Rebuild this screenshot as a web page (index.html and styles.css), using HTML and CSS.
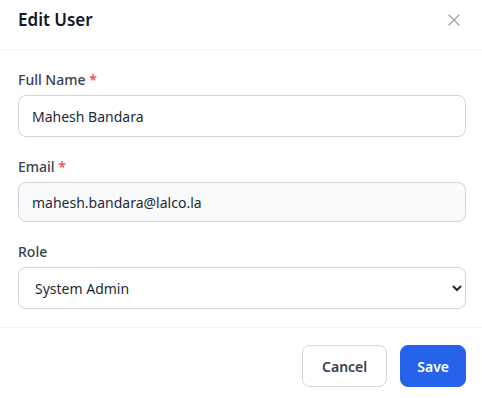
FILE: index.html
```html
<!DOCTYPE html>
<html lang="en">
<head>
    <meta charset="UTF-8">
    <meta name="viewport" content="width=device-width, initial-scale=1.0">
    <title>Edit User</title>
    <link rel="stylesheet" href="styles.css">
</head>
<body>
    <div class="modal">
        <div class="modal-header">
            <h2 class="modal-title">Edit User</h2>
            <button class="close-btn" aria-label="Close">
                <svg width="12" height="12" viewBox="0 0 12 12">
                    <path d="M1 1L11 11M11 1L1 11" stroke="#9ca3af" stroke-width="1.4" stroke-linecap="round"/>
                </svg>
            </button>
        </div>
        <div class="modal-body">
            <div class="field">
                <label for="fullName">Full Name <span class="req">*</span></label>
                <input type="text" id="fullName" value="Mahesh Bandara">
            </div>
            <div class="field">
                <label for="email">Email <span class="req">*</span></label>
                <input type="email" id="email" class="readonly" value="mahesh.bandara@lalco.la" readonly>
            </div>
            <div class="field">
                <label for="role">Role</label>
                <select id="role">
                    <option>System Admin</option>
                    <option>Manager</option>
                    <option>User</option>
                </select>
            </div>
        </div>
        <div class="modal-footer">
            <button class="btn btn-cancel">Cancel</button>
            <button class="btn btn-save">Save</button>
        </div>
    </div>
</body>
</html>
```
FILE: styles.css
```css
body {
    font-family: "Noto Sans", "Open Sans", sans-serif;
    background-color: #fff;
    margin: 0;
    padding: 0;
    color: #111827;
}
.modal {
    width: 482px;
    background-color: #fff;
}
.modal-header {
    display: flex;
    align-items: center;
    justify-content: space-between;
    padding: 6px 22px 15px 18px;
    border-bottom: 1px solid #f3f4f6;
}
.modal-title {
    margin: 0;
    font-size: 17px;
    line-height: 28px;
    font-weight: 600;
    color: #111827;
}
.close-btn {
    background: none;
    border: none;
    padding: 0;
    display: flex;
    cursor: pointer;
}
.modal-body {
    padding: 20px 16px 18px 18px;
    border-bottom: 1px solid #f3f4f6;
}
.field {
    margin-bottom: 20px;
}
.field:last-child {
    margin-bottom: 0;
}
label {
    display: block;
    font-size: 14px;
    line-height: 20px;
    font-weight: 500;
    color: #374151;
    margin-bottom: 5px;
}
.req {
    color: #ef4444;
}
input, select {
    display: block;
    width: 100%;
    box-sizing: border-box;
    height: 42px;
    padding: 0 13px;
    font-family: inherit;
    font-size: 14px;
    color: #1f2937;
    border: 1px solid #d1d5db;
    border-radius: 8px;
    background-color: #fff;
    outline: none;
}
input.readonly {
    background-color: #f9fafb;
    height: 40px;
}
select {
    padding: 0 10px 0 12px;
}
.modal-footer {
    display: flex;
    justify-content: flex-end;
    gap: 13px;
    padding: 17px 16px 11px 18px;
}
.btn {
    height: 42px;
    padding: 0 18px;
    font-family: inherit;
    font-size: 14px;
    font-weight: 600;
    border-radius: 8px;
    cursor: pointer;
}
.btn-cancel {
    padding: 0 19px;
    background-color: #fff;
    border: 1px solid #d1d5db;
    color: #374151;
}
.btn-save {
    padding: 0 16px;
    background-color: #2563eb;
    border: 1px solid #2563eb;
    color: #fff;
}
```
